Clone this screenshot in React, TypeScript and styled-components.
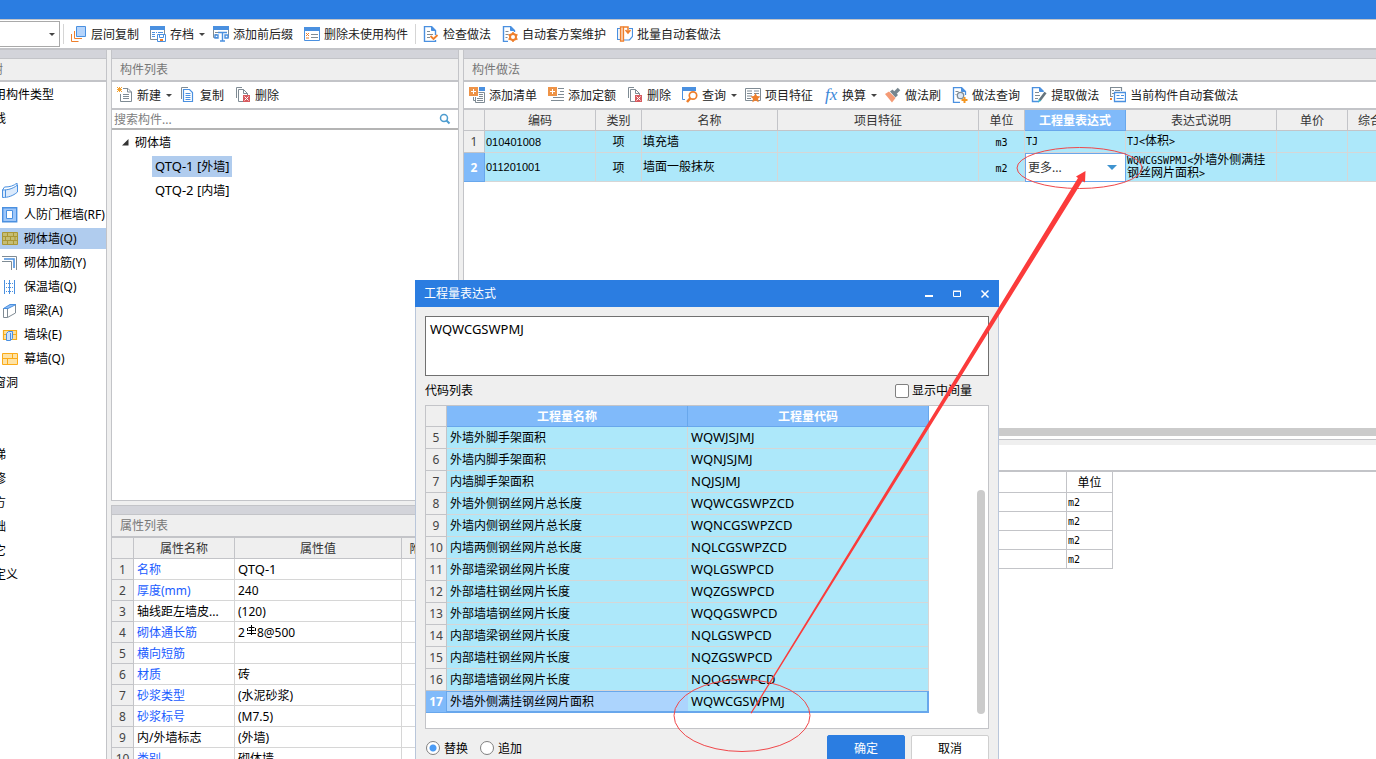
import React from "react";
import styled, { createGlobalStyle, css } from "styled-components";

const UI = `"Noto Sans", "Noto Sans CJK SC", sans-serif`;
const MONO = `"DejaVu Sans Mono", "Noto Sans CJK SC", monospace`;
const line = "#c3c4c8";
const softLine = "#d6d6d6";
const shade = "#efefef";
const blue = "#2b7de1";
const headBlue = "#80bafa";
const cyan = "#ade8fa";

const GlobalStyle = createGlobalStyle`
  * { box-sizing: border-box; }
  html, body { margin: 0; padding: 0; overflow: hidden; }
  body { font: 12px/17px ${UI}; color: #000; background: ${shade}; }
  button, input, textarea, select { font: inherit; color: inherit; }
`;

/* ---------- page frame ---------- */

const Page = styled.div`
  position: relative;
  display: flex;
  flex-direction: column;
  height: 100vh;
  overflow: hidden;
`;

const TitleStrip = styled.div`
  flex: 0 0 20px;
  background: ${blue};
  border-bottom: 1px solid ${line};
`;

const MainBar = styled.header`
  flex: 0 0 30px;
  display: flex;
  align-items: center;
  gap: 3px;
  background: #fff;
  border-bottom: 2px solid ${line};
`;

const FloorPick = styled.div`
  position: relative;
  width: 60px;
  height: 26px;
  display: flex;
  align-items: center;
`;

const FloorSelect = styled.select`
  appearance: none;
  width: 100%;
  height: 100%;
  background: #fff;
  border: 1px solid #a9a9a9;
  border-left: 0;
  border-radius: 0;
`;

const Divider = styled.i`
  width: 1px;
  height: 20px;
  background: #d5d5d5;
`;

const ToolButton = styled.button<{ $menu?: boolean }>`
  display: flex;
  align-items: center;
  gap: 4px;
  height: 23px;
  padding: 0 ${(p) => (p.$menu ? 1 : 4)}px 0 4px;
  border: 0;
  border-radius: 3px;
  background: #fff;
  color: #222;
  white-space: nowrap;
  flex: none;
`;

const Caret = styled.i<{ $over?: boolean; $big?: boolean }>`
  width: 0;
  height: 0;
  border: 3px solid transparent;
  border-top-color: #444;
  border-bottom: 0;
  margin-left: 1px;
  ${(p) => p.$over && css`position: absolute; right: 5px; pointer-events: none;`}
  ${(p) => p.$big && css`right: 8px; border-width: 5px 5px 0; border-top-color: #3f93cf;`}
`;

const Body = styled.main`
  flex: 1;
  min-height: 0;
  display: flex;
  gap: 4px;
`;

const Column = styled.div<{ $w?: number }>`
  flex: ${(p) => (p.$w ? `0 0 ${p.$w}px` : "1 1 0")};
  min-width: 0;
  display: flex;
  flex-direction: column;
`;

const Panel = styled.section<{ $h?: number; $edge?: "left" | "right" }>`
  flex: ${(p) => (p.$h ? `0 0 ${p.$h}px` : "1 1 0")};
  min-height: 0;
  display: flex;
  flex-direction: column;
  overflow: hidden;
  background: #fff;
  border-left: ${(p) => (p.$edge === "left" ? 0 : 1)}px solid ${line};
  border-right: ${(p) => (p.$edge === "right" ? 0 : 1)}px solid ${line};
`;

const PanelGrip = styled.div<{ $top?: boolean }>`
  flex: 0 0 ${(p) => (p.$top ? 10 : 9)}px;
  background: #d3d4da;
  border-bottom: 1px solid ${line};
  border-top: ${(p) => (p.$top ? 1 : 0)}px solid ${line};
`;

const PanelTitle = styled.h2<{ $cut?: boolean }>`
  flex: 0 0 23px;
  margin: 0;
  padding-left: ${(p) => (p.$cut ? 0 : 8)}px;
  text-indent: ${(p) => (p.$cut ? -33 : 0)}px;
  font: 12px/21px ${UI};
  color: #777;
  background: ${shade};
  border-bottom: 2px solid ${line};
`;

const PanelBar = styled.div`
  flex: 0 0 28px;
  display: flex;
  align-items: center;
  gap: 3px;
  padding-left: 1px;
  border-bottom: 2px solid ${line};
`;

/* ---------- navigation ---------- */

const NavList = styled.ul`
  list-style: none;
  margin: 0;
  padding: 0;
`;

const NavRow = styled.li<{ $on?: boolean; $child?: boolean }>`
  display: flex;
  align-items: center;
  gap: 6px;
  height: 21px;
  margin: 2px 0 3px;
  padding-left: ${(p) => (p.$child ? 2 : 0)}px;
  text-indent: ${(p) => (p.$child ? 0 : -18)}px;
  background: ${(p) => (p.$on ? "#b0ccee" : "transparent")};
  white-space: nowrap;
`;

/* ---------- component list ---------- */

const SearchRow = styled.label`
  flex: 0 0 20px;
  display: flex;
  align-items: center;
  padding-right: 7px;
  border-bottom: 2px solid #b4b4b4;
`;

const SearchInput = styled.input`
  flex: 1;
  min-width: 0;
  height: 17px;
  padding: 0 2px;
  border: 0;
  outline: 0;
  &::placeholder { color: #808080; opacity: 1; }
`;

const Tree = styled.ul`
  list-style: none;
  margin: 0;
  padding: 0;
`;

const TreeRow = styled.li<{ $leaf?: boolean }>`
  display: flex;
  align-items: center;
  gap: 6px;
  height: 24px;
  padding-left: ${(p) => (p.$leaf ? 40 : 10)}px;
`;

const TreeName = styled.span<{ $on?: boolean }>`
  line-height: 21px;
  padding: 0 3px;
  margin-left: ${(p) => (p.$on === undefined ? -3 : 0)}px;
  background: ${(p) => (p.$on ? "#b0ccee" : "transparent")};
`;

const PanelGap = styled.div`
  flex: 0 0 5px;
  background: ${shade};
  border-top: 1px solid ${line};
`;

/* ---------- tables ---------- */

const Sheet = styled.table<{ $w: number }>`
  table-layout: fixed;
  border-collapse: separate;
  border-spacing: 0;
  width: ${(p) => p.$w}px;
  flex: none;
`;

const HeadCell = styled.th<{ $on?: boolean; $plain?: boolean }>`
  height: 21px;
  padding: 0;
  font-weight: ${(p) => (p.$on ? 700 : 400)};
  color: ${(p) => (p.$on ? "#fff" : p.$plain ? "#000" : "#333")};
  background: ${(p) => (p.$on ? headBlue : p.$plain ? "#fff" : shade)};
  border: solid ${(p) => (p.$on ? "#68a7ec" : line)};
  border-width: 0 1px 1px 0;
  white-space: nowrap;
  overflow: hidden;
`;

const NumCell = styled.th<{ $on?: boolean }>`
  padding: 0;
  font-weight: ${(p) => (p.$on ? 700 : 400)};
  color: ${(p) => (p.$on ? "#fff" : "#444")};
  background: ${(p) => (p.$on ? headBlue : shade)};
  border: solid ${(p) => (p.$on ? "#68a7ec" : line)};
  border-width: 0 1px 1px 0;
`;

const Cell = styled.td<{
  $h: number;
  $bg?: string;
  $link?: boolean;
  $mid?: boolean;
  $mono?: boolean;
  $grid?: string;
}>`
  height: ${(p) => p.$h}px;
  padding: 0 ${(p) => (p.$mid ? 0 : p.$mono ? 1 : 3)}px;
  text-align: ${(p) => (p.$mid ? "center" : "left")};
  background: ${(p) => p.$bg ?? "#fff"};
  color: ${(p) => (p.$link ? "#1a5cff" : "#000")};
  border: solid ${(p) => p.$grid ?? softLine};
  border-width: 0 1px 1px 0;
  white-space: nowrap;
  overflow: hidden;
  text-overflow: ellipsis;
  ${(p) => p.$mono && css`line-height: 12px;`}
`;

const Mono = styled.span`
  font: 10px/12px ${MONO};
`;

const Digits = styled.span`
  font: 11px/12px "Liberation Sans", sans-serif;
`;

const Latin = styled.span`
  font-size: 13px;
`;

const EditCell = styled.td`
  padding: 0;
  background: #fff;
  border: 1px solid #68a7ec;
`;

const EditBox = styled.div`
  position: relative;
  display: flex;
  align-items: center;
`;

const EditSelect = styled.select`
  appearance: none;
  width: 100%;
  height: 26px;
  padding: 0 2px;
  border: 0;
  background: #fff;
  color: #333;
`;

const ScrollBar = styled.div`
  flex: 0 0 8px;
  margin-bottom: 3px;
  background: #cbcbcb;
`;

const LowerBar = styled.div`
  flex: 0 0 33px;
  background: #fff;
  border-top: 1px solid ${line};
  border-bottom: 2px solid ${line};
  box-shadow: inset 0 5px 0 ${shade};
`;

/* ---------- dialog ---------- */

const Dialog = styled.section`
  position: absolute;
  left: 415px;
  top: 280px;
  width: 584px;
  display: flex;
  flex-direction: column;
  background: ${shade};
`;

const DialogTitle = styled.header`
  display: flex;
  align-items: center;
  height: 27px;
  padding-left: 9px;
  background: ${blue};
  color: #fff;
`;

const DialogName = styled.h2`
  flex: 1;
  margin: 0;
  font: 12px/17px ${UI};
`;

const WindowButton = styled.button`
  width: 28px;
  height: 27px;
  padding: 0;
  border: 0;
  background: transparent;
  display: flex;
  align-items: center;
  justify-content: center;
`;

const DialogBody = styled.div`
  display: flex;
  flex-direction: column;
  padding: 9px 9px 12px;
  border: solid #b9c6da;
  border-width: 0 1px 1px;
`;

const Expression = styled.textarea`
  height: 60px;
  padding: 4px;
  font-size: 13px;
  border: 1px solid #707070;
  border-radius: 0;
  outline: 0;
  resize: none;
  background: #fff;
`;

const ListHead = styled.div`
  display: flex;
  align-items: center;
  justify-content: space-between;
  height: 29px;
  padding-right: 17px;
`;

const Choice = styled.label`
  display: flex;
  align-items: center;
  gap: 3px;
`;

const Tick = styled.input`
  appearance: none;
  width: 14px;
  height: 14px;
  margin: 0;
  border: 1px solid #808080;
  border-radius: 2px;
  background: #fff;
`;

const Dot = styled.input`
  appearance: none;
  width: 14px;
  height: 14px;
  margin: 0 1px;
  border: 1px solid #808080;
  border-radius: 50%;
  background: #fff;
  &:checked {
    background: radial-gradient(circle, #4a9bf5 3px, #fff 4px);
  }
`;

const CodeFrame = styled.div`
  display: flex;
  align-items: flex-start;
  justify-content: space-between;
  height: 324px;
  padding-right: 3px;
  border: 1px solid ${line};
  background: #fff;
`;

const Thumb = styled.div`
  width: 8px;
  height: 224px;
  margin-top: 84px;
  border-radius: 4px;
  background: #cbcbcb;
`;

const CurrentRow = styled.tr`
  & > td {
    border-color: #68a7ec;
    border-width: 1px 0 2px;
  }
  & > td:last-child { border-right-width: 2px; }
`;

const Actions = styled.footer`
  display: flex;
  align-items: center;
  gap: 11px;
  padding-top: 6px;
`;

const ActionButton = styled.button<{ $main?: boolean }>`
  width: 78px;
  height: 26px;
  margin-left: ${(p) => (p.$main ? "auto" : "-5px")};
  padding: 0;
  border: 1px solid ${(p) => (p.$main ? blue : "#cfcfcf")};
  border-radius: 2px;
  background: ${(p) => (p.$main ? blue : "#fff")};
  color: ${(p) => (p.$main ? "#fff" : "#000")};
`;

const Notes = styled.svg`
  position: absolute;
  left: 0;
  top: 0;
  width: 1376px;
  height: 759px;
  pointer-events: none;
`;

/* ---------- icons ---------- */

const Glyph = styled.svg`
  flex: none;
  display: block;
`;

const Fx = styled.span`
  width: 14px;
  color: #3c87d8;
  font: italic 17px/18px "Liberation Serif", serif;
`;

const B = "#4a90e0";
const G = "#7f8b94";
const O = "#ee7f2c";

const Ico = ({ children, w = 16 }: { children: React.ReactNode; w?: number }) => (
  <Glyph width={w} height="16" viewBox={`0 0 ${w} 16`} fill="none" aria-hidden="true">
    {children}
  </Glyph>
);

const icons = {
  floorCopy: (
    <Ico>
      <path d="M3.500 5v7.500H11M.5 8v7.500H7.500" stroke={O} />
      <path d="M5.500.5h9v10h-9z" fill="#b5d4fb" stroke={B} />
    </Ico>
  ),
  archive: (
    <Ico>
      <path d="M.5.5h14v13H.5z" stroke={G} />
      <path d="M0 0h15v4H0z" fill={B} />
      <path d="M2 6.500h3M2 8.500h3M2 10.500h3M6 6.500h1M8 6.500h5" stroke={B} />
      <path d="M7.500 8.500h8v7h-8z" fill="#fff" stroke={B} />
      <path d="M9.500 8.500v3h4v-3" stroke={B} />
      <path d="M10 13h3v2h-3z" fill={O} />
    </Ico>
  ),
  prefix: (
    <Ico>
      <path d="M.5.5h15v11H.5z" stroke={G} />
      <path d="M0 0h16v4H0z" fill={B} />
      <path d="M2 6.500h3M2 8.500h2" stroke={G} />
      <path d="M5 6h10v9H5z" fill="#fff" />
      <path d="M5 6.500h9M9.500 7v8M7 15h5M2 12V9h3v3zM12 12V9h3v3z" stroke={B} strokeWidth="1.400" />
    </Ico>
  ),
  unused: (
    <Ico>
      <path d="M.5 1.500h15v13H.5z" stroke={B} />
      <path d="M0 1h16v4H0z" fill={B} />
      <path d="M2 7l3 3M5 7l-3 3M2 12h3" stroke={O} />
      <path d="M7 8.500h7M7 11.500h7" stroke={G} />
    </Ico>
  ),
  check: (
    <Ico>
      <path d="M12.500 14v1.500h-11V.5h7l4 4V9" stroke={B} strokeWidth="1.400" />
      <path d="M8.500.5v4h4" fill={B} stroke={B} />
      <path d="M4 5.500h3M4 8.500h6M4 11.500h3" stroke={G} />
      <path d="M7.500 10l3 3L14.500 9" stroke={O} strokeWidth="1.800" />
    </Ico>
  ),
  gear: (
    <Ico>
      <path d="M6 15.500H1.500V.5h7l4 4V6" stroke={B} strokeWidth="1.400" />
      <path d="M8.500.5v4h4" fill={B} stroke={B} />
      <path d="M3.500 5.500h3M3.500 8.500h3M3.500 11.500h2" stroke={G} />
      <circle cx="11" cy="11" r="3" stroke={O} strokeWidth="2" />
      <path d="M11 6v2M11 14v2M6.500 8.500l2 1M13.500 12.500l2 1M6.500 13.500l2-1M13.500 9.500l2-1" stroke={O} strokeWidth="1.600" />
    </Ico>
  ),
  batch: (
    <Ico>
      <path d="M4 2.500H.5v11H3M12 2.500h3.500v8l-3 3.500H7" stroke={B} strokeWidth="1.200" />
      <path d="M3.500.8h3v14.400h-3z" fill="#fbd3b4" stroke={O} strokeWidth="1.300" />
      <path d="M6.500 1H11v5M8.500 4l2.500 3 2.500-3" stroke={O} strokeWidth="1.500" />
    </Ico>
  ),
  fresh: (
    <Ico>
      <path d="M6 1.500h5l3.500 3.500v9.500h-11V7" stroke={G} />
      <path d="M10.500 1.500V5h4M6 7.500h6M6 9.500h6M6 11.500h6" stroke={G} />
      <path d="M0 0l5 5M5 0L0 5M2.500 0v5M0 2.500h5" stroke="#f3a12f" />
    </Ico>
  ),
  copy: (
    <Ico>
      <path d="M1.500 12V.5H8" stroke={G} />
      <path d="M3.500 2.500h6l3 3v9h-9z" fill="#fff" stroke={B} strokeWidth="1.200" />
      <path d="M5.500 6.500h5M5.500 8.500h5M5.500 10.500h5M5.500 12.500h5" stroke={B} />
    </Ico>
  ),
  remove: (
    <Ico>
      <path d="M1.500 11V.5H7" stroke={G} />
      <path d="M8 14.500H3.500v-12h5l4 4V8M8.500 2.500v4h4" stroke={G} />
      <path d="M8 8h7v7H8z" fill="#d75a5f" />
      <path d="M9.500 9.500l4 4M13.500 9.500l-4 4" stroke="#fff" />
    </Ico>
  ),
  addList: (
    <Ico>
      <path d="M10 0h6v4h-6z" fill={B} />
      <path d="M9.500 5.500h6v10h-9V10M4.500 10v3.500h2" stroke={G} />
      <path d="M10 7.500h4M10 9.500h4M8 11.500h6M8 13.500h6" stroke={G} />
      <path d="M0 0h9v9H0z" fill="#ee9347" />
      <path d="M4.500 2v5M2 4.500h5" stroke="#fff" />
    </Ico>
  ),
  addQuota: (
    <Ico>
      <path d="M10 1.500h6M12 4.500h4M10 7.500h6M5 10.500h11M3 13.500h13" stroke={G} />
      <path d="M0 0h9v9H0z" fill="#ee9347" />
      <path d="M4.500 2v5M2 4.500h5" stroke="#fff" />
    </Ico>
  ),
  find: (
    <Ico>
      <path d="M.5 1v11.500H3M13.500 1v3" stroke={B} />
      <path d="M0 0h14v4H0z" fill={B} />
      <circle cx="11" cy="8.500" r="3.700" fill="#fff" stroke={O} strokeWidth="1.700" />
      <path d="M8.500 11L5 15" stroke={O} strokeWidth="2.500" />
    </Ico>
  ),
  feature: (
    <Ico>
      <path d="M.5 1.500h15v12H.5z" stroke={G} />
      <path d="M2 4h5M2 6.500h5M2 9h5M2 11.500h4M9 4h5M9 6.500h5" stroke={G} />
      <path d="M10.500 6l1.500 3 3.500.4-2.500 2.300.7 3.600-3.200-1.700-3.200 1.700.7-3.600-2.500-2.300 3.500-.4z" fill={O} />
    </Ico>
  ),
  brush: (
    <Ico>
      <path d="M0 7l4-2.500 6.500 6.500L7 15.500z" fill="#f49a75" />
      <path d="M5 4.500l2.500-2L13 8l-2.500 2.500z" fill="#77868f" />
      <path d="M10 6l4-4" stroke="#77868f" strokeWidth="3.500" />
    </Ico>
  ),
  docFind: (
    <Ico>
      <path d="M8 15.500H1.500V.5h8l4 4V8" stroke={B} strokeWidth="1.300" />
      <path d="M9.500.5v4h4" fill={B} stroke={B} />
      <path d="M3.500 4.500h3M3.500 7.500h1" stroke={G} />
      <circle cx="8.500" cy="8.500" r="3.200" fill="#dbe7f5" stroke={G} strokeWidth="1.300" />
      <path d="M12.500 10v6M9.500 13h6" stroke="#f4951f" strokeWidth="2" />
    </Ico>
  ),
  extract: (
    <Ico>
      <path d="M8 14.500H1.500V.5h7l4 4" stroke={B} strokeWidth="1.400" />
      <path d="M8.500.5v4h4" fill={B} stroke={B} />
      <path d="M4 5.500h4M4 8.500h5M4 11.500h3" stroke={G} />
      <path d="M8.500 13.500L14.500 5.500" stroke="#65747d" strokeWidth="2.600" />
      <path d="M7 15.500l1-3.500 2.200 1.700z" fill="#34b3c8" />
    </Ico>
  ),
  current: (
    <Ico>
      <path d="M3 9.500H.5v-9h11V4M2 3.500h2M5 3.500h5M2 6.500h2" stroke={G} strokeWidth="1.200" />
      <path d="M4.500 5.500h11v9h-11z" fill="#fff" stroke={B} strokeWidth="1.300" />
      <path d="M6.500 8.500h3M11 8.500h3M6.500 11.500h7" stroke={B} />
      <path d="M0 11h2v2H0z" fill={O} />
    </Ico>
  ),
  shear: (
    <Ico>
      <path d="M.5 7c5 0 10-1 15-5v7C11 13 6 14.500.5 14.500z" fill="#dbeafc" stroke={B} />
      <path d="M.5 7l2-3c5 0 9-1 12.500-4v2M3.500 7v7" stroke={B} />
    </Ico>
  ),
  frame: (
    <Ico>
      <path d="M.7.7h14v14H.7z" fill="#9ec7fa" stroke={B} strokeWidth="1.400" />
      <path d="M4.500 3.500h6v8h-6z" fill="#fff" stroke={B} />
    </Ico>
  ),
  brick: (
    <Ico>
      <path d="M.5 1.500h15v12H.5z" fill="#c5bd73" stroke="#aa9734" />
      <path d="M0 5.500h16M0 9.500h16M5.500 1v4M11.500 1v4M3.500 5v4M8.500 5v4M13 5v4M5.500 10v4M11.500 10v4" stroke="#aa9734" />
    </Ico>
  ),
  rebar: (
    <Ico>
      <path d="M0 1.500h14.500V15M0 6.500h9.500V15" stroke={G} />
      <path d="M2 4h10v9" stroke={B} strokeWidth="1.600" />
    </Ico>
  ),
  insul: (
    <Ico>
      <path d="M2.500 1v14M7.500 1v14M12.500 1v14" stroke={B} />
      <path d="M4 4.500h8M4 8.500h8M4 12.500h8" stroke={B} strokeDasharray="1 1" />
    </Ico>
  ),
  beam: (
    <Ico>
      <path d="M1.500 5.500h4v9h-4zM5.500 14.500l8-4.500V2" stroke={G} />
      <path d="M1.500 5.500L8 1.500h6L6 5.500z" fill="#8fbdf5" stroke={B} />
    </Ico>
  ),
  pier: (
    <Ico>
      <path d="M1.500 3.500h13v9h-13zM1 7.500h14" fill="#fde0a0" stroke="#f6ac1b" strokeWidth="1.200" />
      <path d="M4.500 6.500l2-2h4v7l-2 2h-4zM8.500 6v7" fill="#cfe2fb" stroke={B} />
    </Ico>
  ),
  curtain: (
    <Ico>
      <path d="M.5 2.500h15v11H.5zM0 7.500h16M10.500 3v4.500M5.500 8v6" fill="#fee3a6" stroke="#fbab19" />
    </Ico>
  ),
};

type IconName = keyof typeof icons;

const Tool = ({ icon, text, menu }: { icon: IconName | "fx"; text: string; menu?: boolean }) => (
  <ToolButton type="button" $menu={menu}>
    {icon === "fx" ? <Fx aria-hidden="true">fx</Fx> : icons[icon]}
    {text}
    {menu && <Caret />}
  </ToolButton>
);

/* ---------- data ---------- */

const nav: { text: string; icon?: IconName; on?: boolean }[] = [
  { text: "常用构件类型" },
  { text: "轴线" },
  { text: "" },
  { text: "" },
  { text: "剪力墙(Q)", icon: "shear" },
  { text: "人防门框墙(RF)", icon: "frame" },
  { text: "砌体墙(Q)", icon: "brick", on: true },
  { text: "砌体加筋(Y)", icon: "rebar" },
  { text: "保温墙(Q)", icon: "insul" },
  { text: "暗梁(A)", icon: "beam" },
  { text: "墙垛(E)", icon: "pier" },
  { text: "幕墙(Q)", icon: "curtain" },
  { text: "门窗洞" },
  { text: "" },
  { text: "" },
  { text: "楼梯" },
  { text: "装修" },
  { text: "土方" },
  { text: "基础" },
  { text: "其它" },
  { text: "自定义" },
];

const Rebar = () => (
  <svg width="12" height="12" viewBox="0 0 12 12" fill="none" stroke="#000" role="img" aria-label="钢筋">
    <path d="M6.500 0v10M2 8.500h9M3.500 2.500h6M3.500 5.500h6M2.500 3v3M10.500 3v3" />
  </svg>
);

const props: [string, React.ReactNode, boolean][] = [
  ["名称", <Latin>QTQ-1</Latin>, true],
  ["厚度(mm)", "240", true],
  ["轴线距左墙皮...", "(120)", false],
  ["砌体通长筋", <>2<Rebar />8@500</>, true],
  ["横向短筋", "", true],
  ["材质", "砖", true],
  ["砂浆类型", "(水泥砂浆)", true],
  ["砂浆标号", "(M7.5)", true],
  ["内/外墙标志", "(外墙)", false],
  ["类别", "砌体墙", true],
];

const codes: [string, string][] = [
  ["外墙外脚手架面积", "WQWJSJMJ"],
  ["外墙内脚手架面积", "WQNJSJMJ"],
  ["内墙脚手架面积", "NQJSJMJ"],
  ["外墙外侧钢丝网片总长度", "WQWCGSWPZCD"],
  ["外墙内侧钢丝网片总长度", "WQNCGSWPZCD"],
  ["内墙两侧钢丝网片总长度", "NQLCGSWPZCD"],
  ["外部墙梁钢丝网片长度", "WQLGSWPCD"],
  ["外部墙柱钢丝网片长度", "WQZGSWPCD"],
  ["外部墙墙钢丝网片长度", "WQQGSWPCD"],
  ["内部墙梁钢丝网片长度", "NQLGSWPCD"],
  ["内部墙柱钢丝网片长度", "NQZGSWPCD"],
  ["内部墙墙钢丝网片长度", "NQQGSWPCD"],
  ["外墙外侧满挂钢丝网片面积", "WQWCGSWPMJ"],
];

const Cols = ({ w }: { w: number[] }) => (
  <colgroup>
    {w.map((x, i) => (
      <col key={i} width={x} />
    ))}
  </colgroup>
);

/* ---------- sections ---------- */

const MethodTable = () => (
  <Sheet $w={953}>
    <Cols w={[21, 111, 46, 136, 201, 46, 101, 151, 71, 69]} />
    <thead>
      <tr>
        {["", "编码", "类别", "名称", "项目特征", "单位", "工程量表达式", "表达式说明", "单价", "综合单价"].map((t, i) => (
          <HeadCell key={i} $on={i === 6}>{t}</HeadCell>
        ))}
      </tr>
    </thead>
    <tbody>
      <tr>
        <NumCell>1</NumCell>
        <Cell $h={22} $bg={cyan} $mono><Digits>010401008</Digits></Cell>
        <Cell $h={22} $bg={cyan} $mid>项</Cell>
        <Cell $h={22} $bg={cyan} $mono>填充墙</Cell>
        <Cell $h={22} $bg={cyan} />
        <Cell $h={22} $bg={cyan} $mid><Mono>m3</Mono></Cell>
        <Cell $h={22} $bg={cyan} $mono><Mono>TJ</Mono></Cell>
        <Cell $h={22} $bg={cyan} $mono><Mono>TJ&lt;</Mono>体积<Mono>&gt;</Mono></Cell>
        <Cell $h={22} $bg={cyan} />
        <Cell $h={22} $bg={cyan} />
      </tr>
      <tr>
        <NumCell $on>2</NumCell>
        <Cell $h={29} $bg={cyan} $mono><Digits>011201001</Digits></Cell>
        <Cell $h={29} $bg={cyan} $mid>项</Cell>
        <Cell $h={29} $bg={cyan} $mono>墙面一般抹灰</Cell>
        <Cell $h={29} $bg={cyan} />
        <Cell $h={29} $bg={cyan} $mid><Mono>m2</Mono></Cell>
        <EditCell>
          <EditBox>
            <EditSelect aria-label="工程量表达式">
              <option>更多...</option>
            </EditSelect>
            <Caret $over $big />
          </EditBox>
        </EditCell>
        <Cell $h={29} $bg={cyan} $mono>
          <Mono>WQWCGSWPMJ&lt;</Mono>外墙外侧满挂
          <br />
          钢丝网片面积<Mono>&gt;</Mono>
        </Cell>
        <Cell $h={29} $bg={cyan} />
        <Cell $h={29} $bg={cyan} />
      </tr>
    </tbody>
  </Sheet>
);

const ExpressionDialog = () => (
  <Dialog role="dialog" aria-label="工程量表达式">
    <DialogTitle>
      <DialogName>工程量表达式</DialogName>
      <WindowButton type="button" aria-label="最小化">
        <svg width="10" height="10"><path d="M1 7h8" stroke="#fff" strokeWidth="2" /></svg>
      </WindowButton>
      <WindowButton type="button" aria-label="最大化">
        <svg width="10" height="10"><path d="M1.500 2.500h7v5h-7zM1 2h8" fill="none" stroke="#fff" /></svg>
      </WindowButton>
      <WindowButton type="button" aria-label="关闭">
        <svg width="10" height="10"><path d="M1.500 1.500l7 7M8.500 1.500l-7 7" stroke="#fff" strokeWidth="1.500" /></svg>
      </WindowButton>
    </DialogTitle>
    <DialogBody>
      <Expression aria-label="表达式" defaultValue="WQWCGSWPMJ" spellCheck={false} />
      <ListHead>
        代码列表
        <Choice>
          <Tick type="checkbox" />
          显示中间量
        </Choice>
      </ListHead>
      <CodeFrame>
        <Sheet $w={503}>
          <Cols w={[21, 241, 241]} />
          <thead>
            <tr>
              <HeadCell />
              <HeadCell $on>工程量名称</HeadCell>
              <HeadCell $on>工程量代码</HeadCell>
            </tr>
          </thead>
          <tbody>
            {codes.map(([name, code], i) => {
              const on = i === codes.length - 1;
              const Row = on ? CurrentRow : "tr";
              return (
                <Row key={code}>
                  <NumCell $on={on}>{i + 5}</NumCell>
                  <Cell $h={22} $bg={on ? "#acd4fd" : cyan}>{name}</Cell>
                  <Cell $h={22} $bg={cyan}><Latin>{code}</Latin></Cell>
                </Row>
              );
            })}
          </tbody>
        </Sheet>
        <Thumb />
      </CodeFrame>
      <Actions>
        <Choice>
          <Dot type="radio" name="mode" defaultChecked />
          替换
        </Choice>
        <Choice>
          <Dot type="radio" name="mode" />
          追加
        </Choice>
        <ActionButton type="button" $main>确定</ActionButton>
        <ActionButton type="button">取消</ActionButton>
      </Actions>
    </DialogBody>
  </Dialog>
);

export default function App() {
  return (
    <>
      <GlobalStyle />
      <Page>
        <TitleStrip />
        <MainBar>
          <FloorPick>
            <FloorSelect aria-label="楼层"><option /></FloorSelect>
            <Caret $over />
          </FloorPick>
          <Divider />
          <Tool icon="floorCopy" text="层间复制" />
          <Tool icon="archive" text="存档" menu />
          <Tool icon="prefix" text="添加前后缀" />
          <Tool icon="unused" text="删除未使用构件" />
          <Divider />
          <Tool icon="check" text="检查做法" />
          <Tool icon="gear" text="自动套方案维护" />
          <Tool icon="batch" text="批量自动套做法" />
        </MainBar>
        <Body>
          <Column $w={107}>
            <Panel $edge="left">
              <PanelGrip />
              <PanelTitle $cut>导航树</PanelTitle>
              <NavList>
                {nav.map((n, i) => (
                  <NavRow key={i} $on={n.on} $child={!!n.icon}>
                    {n.icon && icons[n.icon]}
                    {n.text}
                  </NavRow>
                ))}
              </NavList>
            </Panel>
          </Column>
          <Column $w={348}>
            <Panel>
              <PanelGrip />
              <PanelTitle>构件列表</PanelTitle>
              <PanelBar>
                <Tool icon="fresh" text="新建" menu />
                <Tool icon="copy" text="复制" />
                <Tool icon="remove" text="删除" />
              </PanelBar>
              <SearchRow>
                <SearchInput type="text" placeholder="搜索构件..." aria-label="搜索构件" />
                <svg width="12" height="12" fill="none" stroke="#4d9ccf" strokeWidth="1.500">
                  <circle cx="5" cy="5" r="3.500" />
                  <path d="M7.500 7.500l3 3" strokeWidth="2" />
                </svg>
              </SearchRow>
              <Tree>
                <TreeRow>
                  <svg width="7" height="7" aria-hidden="true"><path d="M6.500 0v6.500H0z" fill="#333" /></svg>
                  <TreeName>砌体墙</TreeName>
                </TreeRow>
                <TreeRow $leaf>
                  <TreeName $on><Latin>QTQ-1 [</Latin>外墙<Latin>]</Latin></TreeName>
                </TreeRow>
                <TreeRow $leaf>
                  <TreeName $on={false}><Latin>QTQ-2 [</Latin>内墙<Latin>]</Latin></TreeName>
                </TreeRow>
              </Tree>
            </Panel>
            <PanelGap />
            <Panel $h={254}>
              <PanelGrip $top />
              <PanelTitle>属性列表</PanelTitle>
              <Sheet $w={330}>
                <Cols w={[22, 101, 167, 40]} />
                <thead>
                  <tr>
                    <HeadCell />
                    <HeadCell>属性名称</HeadCell>
                    <HeadCell>属性值</HeadCell>
                    <HeadCell>附加</HeadCell>
                  </tr>
                </thead>
                <tbody>
                  {props.map(([name, value, link], i) => (
                    <tr key={name}>
                      <NumCell>{i + 1}</NumCell>
                      <Cell $h={21} $link={link}>{name}</Cell>
                      <Cell $h={21}>{value}</Cell>
                      <Cell $h={21} />
                    </tr>
                  ))}
                </tbody>
              </Sheet>
            </Panel>
          </Column>
          <Column>
            <Panel $edge="right">
              <PanelGrip />
              <PanelTitle>构件做法</PanelTitle>
              <PanelBar>
                <Tool icon="addList" text="添加清单" />
                <Tool icon="addQuota" text="添加定额" />
                <Tool icon="remove" text="删除" />
                <Tool icon="find" text="查询" menu />
                <Tool icon="feature" text="项目特征" />
                <Tool icon="fx" text="换算" menu />
                <Tool icon="brush" text="做法刷" />
                <Tool icon="docFind" text="做法查询" />
                <Tool icon="extract" text="提取做法" />
                <Tool icon="current" text="当前构件自动套做法" />
              </PanelBar>
              <MethodTable />
            </Panel>
            <Panel $h={331} $edge="right">
              <ScrollBar />
              <LowerBar />
              <Sheet $w={649}>
                <Cols w={[603, 46]} />
                <thead>
                  <tr>
                    <HeadCell $plain />
                    <HeadCell $plain>单位</HeadCell>
                  </tr>
                </thead>
                <tbody>
                  {[0, 1, 2, 3].map((i) => (
                    <tr key={i}>
                      <Cell $h={19} $grid={line} />
                      <Cell $h={19} $grid={line} $mono><Mono>m2</Mono></Cell>
                    </tr>
                  ))}
                </tbody>
              </Sheet>
            </Panel>
          </Column>
        </Body>
        <ExpressionDialog />
        <Notes viewBox="0 0 1376 759" aria-hidden="true">
          <g fill="none" stroke="#f0474a">
            <ellipse cx="1079.500" cy="168" rx="62.500" ry="20.500" />
            <ellipse cx="742" cy="715.500" rx="68" ry="36" />
          </g>
          <path d="M750.500 713L1078 178L1076 176.500L1085.500 171L1085 182.500L1082.500 181L751.500 713.500Z" fill="#fb3b3b" />
        </Notes>
      </Page>
    </>
  );
}
